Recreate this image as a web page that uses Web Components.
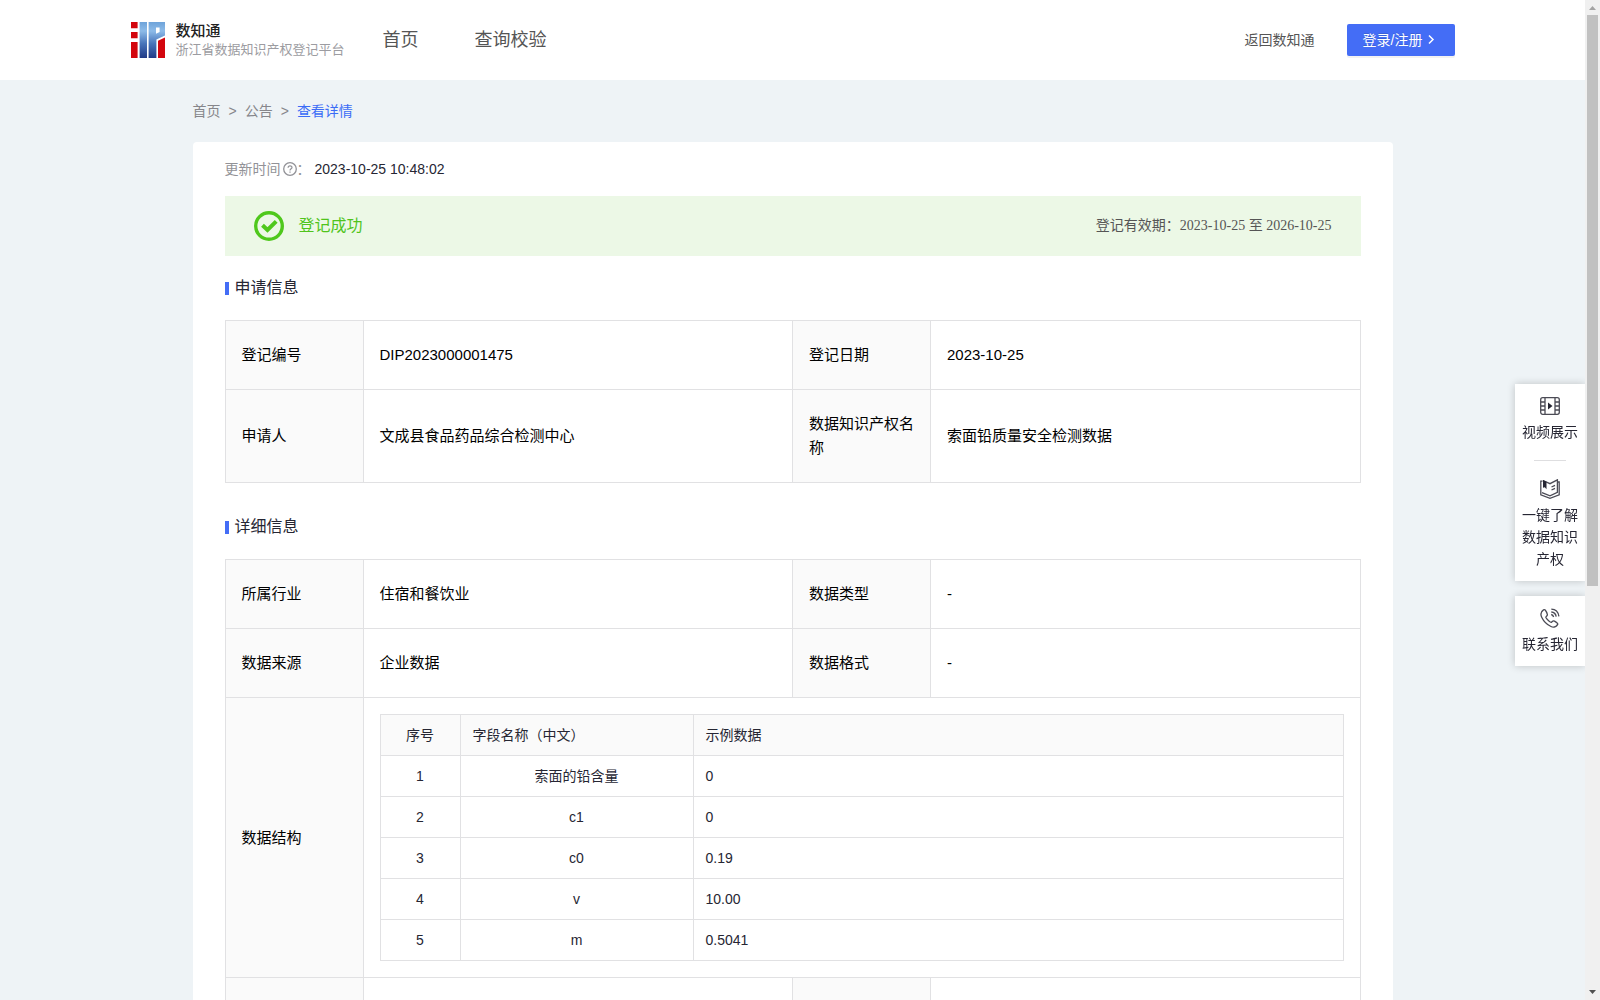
<!DOCTYPE html>
<html lang="zh-CN">
<head>
<meta charset="UTF-8">
<meta name="viewport" content="width=device-width, initial-scale=1.0">
<title>浙江省数据知识产权登记平台</title>
<style>
  body {
    margin: 0;
    font-family: "Liberation Sans", "Noto Sans CJK SC", sans-serif;
    font-size: 14px;
    line-height: 22px;
    color: #262633;
  }
</style>
</head>
<body>
<app-shell>
  <site-header></site-header>
  <crumb-trail></crumb-trail>
  <detail-card>
    <update-time>2023-10-25 10:48:02</update-time>
    <status-banner>
      登记成功
      <span slot="period">登记有效期：2023-10-25 至 2026-10-25</span>
    </status-banner>
    <info-section heading="申请信息">
      <apply-table></apply-table>
    </info-section>
    <info-section heading="详细信息">
      <detail-table></detail-table>
    </info-section>
  </detail-card>
  <side-tools slot="over"></side-tools>
</app-shell>

<script>
// Base: cada componente define su plantilla
class BaseElement extends HTMLElement {
  constructor() {
    super();
    this.attachShadow({ mode: 'open' });
    this.shadowRoot.innerHTML = this.template();
  }
}

class AppShell extends BaseElement {
  template() {
    return `
      <style>
        :host {
          display: grid;
          grid-template-columns: minmax(0, 1fr) 15px;
          height: 100vh;
          background: #eef3f6;
        }
        .view {
          overflow-y: auto;
          scrollbar-width: none;
        }
        .bar {
          display: flex;
          flex-direction: column;
          align-items: center;
          background: #f0f0f0;
        }
        .bar svg { display: block; flex: none; }
        .thumb {
          flex: 571;
          width: 11px;
          background: #c1c1c1;
        }
        .rest { flex: 399; }
      </style>
      <div class="view"><slot></slot></div>
      <div class="bar" aria-hidden="true">
        <svg width="15" height="15"><path d="M4 10h7l-3.500-4z" fill="#a3a3a3"/></svg>
        <div class="thumb"></div>
        <div class="rest"></div>
        <svg width="15" height="15"><path d="M4 5h7l-3.500 4z" fill="#505050"/></svg>
      </div>
      <slot name="over"></slot>
    `;
  }
}
customElements.define('app-shell', AppShell);

// Header
class SiteHeader extends BaseElement {
  template() {
    return `
      <style>
        :host {
          display: block;
          background: #fff;
        }
        header {
          display: flex;
          align-items: center;
          height: 80px;
          max-width: 1324px;
          margin: 0 auto;
        }
        a { color: #555; text-decoration: none; }
        .brand {
          display: flex;
          align-items: center;
          gap: 11px;
          width: 252px;
          white-space: nowrap;
        }
        .brand svg { flex: none; }
        .brand strong {
          display: block;
          font-size: 15px;
          font-weight: 500;
          line-height: 20px;
          color: #222;
        }
        .brand small {
          display: block;
          font-size: 13px;
          line-height: 18px;
          color: #9c9ca1;
        }
        nav {
          display: flex;
          flex: 1;
          gap: 56px;
          font-size: 18px;
        }
        .back { margin-right: 32px; }
        button {
          display: flex;
          align-items: center;
          gap: 3px;
          width: 108px;
          height: 32px;
          padding: 0 16px;
          border: 0;
          border-radius: 2px;
          background: #446df6;
          box-shadow: 0 2px 0 rgba(0, 0, 0, 0.05);
          color: #fff;
          font: inherit;
          text-shadow: 0 -1px 0 rgba(0, 0, 0, 0.12);
          white-space: nowrap;
          cursor: pointer;
        }
      </style>
      <header>
        <a class="brand" href="#">
          <svg width="34" height="36" viewBox="0 0 34 36">
            <defs>
              <linearGradient id="blue" x1="0" y1="0" x2="0" y2="36" gradientUnits="userSpaceOnUse">
                <stop offset="0" stop-color="#6ea3da"/>
                <stop offset=".25" stop-color="#8dbbe8"/>
                <stop offset=".6" stop-color="#4874ba"/>
                <stop offset="1" stop-color="#213a86"/>
              </linearGradient>
            </defs>
            <path d="M0 0h6.600v6.300H0zM0 10h6.600v6.300H0zM0 20h6.600v16H0zM27 18.800l7-3.200V36h-7z" fill="#d3060e"/>
            <path d="M8.600 0h7.400v36H8.600z" fill="url(#blue)"/>
            <path fill-rule="evenodd" d="M17.600 0H34v13.600l-8.600 4V36h-7.800zM25 5.400v6.400l3.600-1.800V5.400z" fill="url(#blue)"/>
          </svg>
          <span><strong>数知通</strong><small>浙江省数据知识产权登记平台</small></span>
        </a>
        <nav>
          <a href="#">首页</a>
          <a href="#">查询校验</a>
        </nav>
        <a class="back" href="#">返回数知通</a>
        <button type="button">登录/注册
          <svg width="12" height="12" viewBox="0 0 12 12" fill="none" stroke="#fff" stroke-width="1.500"><path d="M4 1.500l4 4-4 4"/></svg>
        </button>
      </header>
    `;
  }
}
customElements.define('site-header', SiteHeader);

// Breadcrumb
class CrumbTrail extends BaseElement {
  template() {
    return `
      <style>
        :host {
          display: flex;
          align-items: center;
          gap: 8px;
          height: 62px;
          max-width: 1200px;
          margin: 0 auto;
          color: #86868b;
        }
        a { color: inherit; text-decoration: none; }
        .here { color: #3b6cf6; }
      </style>
      <a href="#">首页</a><span>&gt;</span>
      <a href="#">公告</a><span>&gt;</span>
      <a class="here" href="#" aria-current="page">查看详情</a>
    `;
  }
}
customElements.define('crumb-trail', CrumbTrail);

// White card
class DetailCard extends BaseElement {
  template() {
    return `
      <style>
        :host {
          display: block;
          box-sizing: border-box;
          max-width: 1200px;
          margin: 0 auto;
          padding: 0 32px 32px;
          border-radius: 4px 4px 0 0;
          background: #fff;
        }
      </style>
      <slot></slot>
    `;
  }
}
customElements.define('detail-card', DetailCard);

class UpdateTime extends BaseElement {
  template() {
    return `
      <style>
        :host {
          display: flex;
          align-items: center;
          height: 54px;
        }
        .label {
          display: flex;
          align-items: center;
          color: #929297;
        }
        svg { margin-left: 2px; }
        .value { margin-left: 4px; }
      </style>
      <span class="label">更新时间<svg width="14" height="14" viewBox="0 0 14 14" fill="none" stroke="#929297"><circle cx="7" cy="7" r="6.300" stroke-width="1.300"/><path d="M5.100 5.700c0-2.500 3.900-2.400 3.900-.2C9 6.800 7 6.800 7 8.500M7 9.500v1.200" stroke-width="1.200"/></svg>：</span>
      <span class="value"><slot></slot></span>
    `;
  }
}
customElements.define('update-time', UpdateTime);

// Green result strip
class StatusBanner extends BaseElement {
  template() {
    return `
      <style>
        :host {
          display: flex;
          align-items: center;
          height: 60px;
          padding: 0 29px;
          background: #ecf8e6;
        }
        svg { margin-right: 15px; }
        .state {
          flex: 1;
          font-size: 16px;
          color: #50c41c;
        }
        .period {
          font-family: "Liberation Serif", "Noto Sans CJK SC", serif;
          color: #555;
        }
      </style>
      <svg width="30" height="30" viewBox="0 0 30 30" fill="none" stroke="#4fc81c">
        <circle cx="15" cy="15" r="13.300" stroke-width="3.400"/>
        <path d="M8.500 14.200l5 4.800 8.700-8.600" stroke-width="4"/>
      </svg>
      <span class="state"><slot></slot></span>
      <span class="period"><slot name="period"></slot></span>
    `;
  }
}
customElements.define('status-banner', StatusBanner);

// Titled section
class InfoSection extends BaseElement {
  template() {
    return `
      <style>
        :host { display: block; padding-top: 20px; }
        :host(:last-of-type) { padding-top: 32px; }
        h2 {
          display: flex;
          align-items: center;
          gap: 6px;
          margin: 0 0 20px;
          font-size: 16px;
          font-weight: 400;
          line-height: 24px;
        }
        h2::before {
          content: "";
          width: 4px;
          height: 13px;
          background: #446df6;
        }
      </style>
      <h2></h2>
      <slot></slot>
    `;
  }
  connectedCallback() {
    this.shadowRoot.querySelector('h2').textContent = this.getAttribute('heading');
  }
}
customElements.define('info-section', InfoSection);

// Estilos comunes de las tablas
const tableStyles = `
  :host { display: block; }
  table {
    width: 100%;
    border-collapse: collapse;
    table-layout: fixed;
  }
  th, td {
    border: 1px solid #e1e1e3;
    text-align: left;
    font-weight: 400;
  }
  th { background: #fafafa; }
`;

const formStyles = `
  col.label { width: 138px; }
  th, td {
    padding: 22px 16px;
    font-size: 15px;
    line-height: 24px;
    color: #000;
  }
  td.nested { padding: 16px; }
`;

class ApplyTable extends BaseElement {
  template() {
    return `
      <style>${tableStyles}${formStyles}</style>
      <table>
        <colgroup><col class="label"><col><col class="label"><col></colgroup>
        <tr>
          <th scope="row">登记编号</th><td>DIP2023000001475</td>
          <th scope="row">登记日期</th><td>2023-10-25</td>
        </tr>
        <tr>
          <th scope="row">申请人</th><td>文成县食品药品综合检测中心</td>
          <th scope="row">数据知识产权名称</th><td>索面铅质量安全检测数据</td>
        </tr>
      </table>
    `;
  }
}
customElements.define('apply-table', ApplyTable);

// Field list shown inside the data structure row
class FieldTable extends BaseElement {
  template() {
    const fields = [
      ['索面的铅含量', '0'],
      ['c1', '0'],
      ['c0', '0.19'],
      ['v', '10.00'],
      ['m', '0.5041'],
    ];
    return `
      <style>
        ${tableStyles}
        th, td {
          height: 40px;
          padding: 0 12px;
          font-size: 14px;
          line-height: 22px;
          color: #262633;
        }
        col.no { width: 80px; }
        col.name { width: 233px; }
        th:first-child, td:first-child, td:nth-child(2) { text-align: center; }
      </style>
      <table>
        <colgroup><col class="no"><col class="name"><col></colgroup>
        <thead>
          <tr><th scope="col">序号</th><th scope="col">字段名称（中文）</th><th scope="col">示例数据</th></tr>
        </thead>
        <tbody>
          ${fields.map(([name, sample], i) => `<tr><td>${i + 1}</td><td>${name}</td><td>${sample}</td></tr>`).join('')}
        </tbody>
      </table>
    `;
  }
}
customElements.define('field-table', FieldTable);

class DetailTable extends BaseElement {
  template() {
    return `
      <style>${tableStyles}${formStyles}</style>
      <table>
        <colgroup><col class="label"><col><col class="label"><col></colgroup>
        <tr>
          <th scope="row">所属行业</th><td>住宿和餐饮业</td>
          <th scope="row">数据类型</th><td>-</td>
        </tr>
        <tr>
          <th scope="row">数据来源</th><td>企业数据</td>
          <th scope="row">数据格式</th><td>-</td>
        </tr>
        <tr>
          <th scope="row">数据结构</th>
          <td class="nested" colspan="3"><field-table></field-table></td>
        </tr>
        <tr><th></th><td></td><th></th><td></td></tr>
      </table>
    `;
  }
}
customElements.define('detail-table', DetailTable);

// Floating shortcuts on the right edge
class SideTools extends BaseElement {
  template() {
    return `
      <style>
        :host {
          position: fixed;
          top: 384px;
          right: 15px;
          display: grid;
          gap: 15px;
          width: 70px;
          clip-path: inset(-12px 0 -12px -12px);
        }
        .group {
          background: #fff;
          box-shadow: 0 0 8px rgba(0, 0, 0, 0.2);
        }
        a {
          display: flex;
          flex-direction: column;
          align-items: center;
          gap: 5px;
          padding: 12px 7px 11px;
          color: #262633;
          text-align: center;
          text-decoration: none;
        }
        hr {
          width: 32px;
          height: 1px;
          margin: 6px auto;
          border: 0;
          background: #dedee0;
        }
        svg { fill: none; stroke: #4b4b55; stroke-width: 1.300; }
        .solid { fill: #262633; stroke: none; }
      </style>
      <div class="group">
        <a href="#">
          <svg width="20" height="20" viewBox="0 0 20 20">
            <rect x=".7" y="1.700" width="18.600" height="16.600" rx="2"/>
            <path d="M5 2v16M15 2v16M1 6h4M1 10h4M1 14h4M15 6h4M15 10h4M15 14h4"/>
            <path class="solid" d="M8 6.500v7l4.500-3.500z"/>
          </svg>
          视频展示
        </a>
        <hr>
        <a href="#">
          <svg width="20" height="20" viewBox="0 0 20 20">
            <path d="M2.500 2.200H.8v13.600l9.200 3.500 9.200-3.500V3h-1.700"/>
            <path d="M3 1.500l7 3.200 7.400-3.900v12.600L10 16.800l-8-3.200M11.500 8l3.500-1.700M11.500 11l3.500-1.700"/>
            <path class="solid" d="M3 1l3.500 1.800v7.400L4.800 8.300 3 8.700z"/>
          </svg>
          一键了解数据知识产权
        </a>
      </div>
      <div class="group">
        <a href="#">
          <svg width="20" height="20" viewBox="0 0 20 20">
            <path d="M3.500 1.900C1 3.500.2 6 1.700 9.200c2 4.200 5 7.300 9.300 9.300 2.700 1.200 5.500.2 6.700-2.100.5-1-.1-1.600-3.200-3.300-1.500-.8-2 .2-3 1.100-.8.700-5-3.200-5.600-4.800-.3-.9 1.700-1.500 1.500-2.700C7 4.900 6 2.900 5.200 2c-.5-.5-1.100-.5-1.700-.1z"/>
            <path d="M11.300 1.200c4.200.2 7 3 7.600 7.200M11.300 4c2.800.2 4.500 2 4.900 4.700M11.200 6.500c1.400.3 2.100 1 2.400 2.500"/>
          </svg>
          联系我们
        </a>
      </div>
    `;
  }
}
customElements.define('side-tools', SideTools);
</script>
</body>
</html>
